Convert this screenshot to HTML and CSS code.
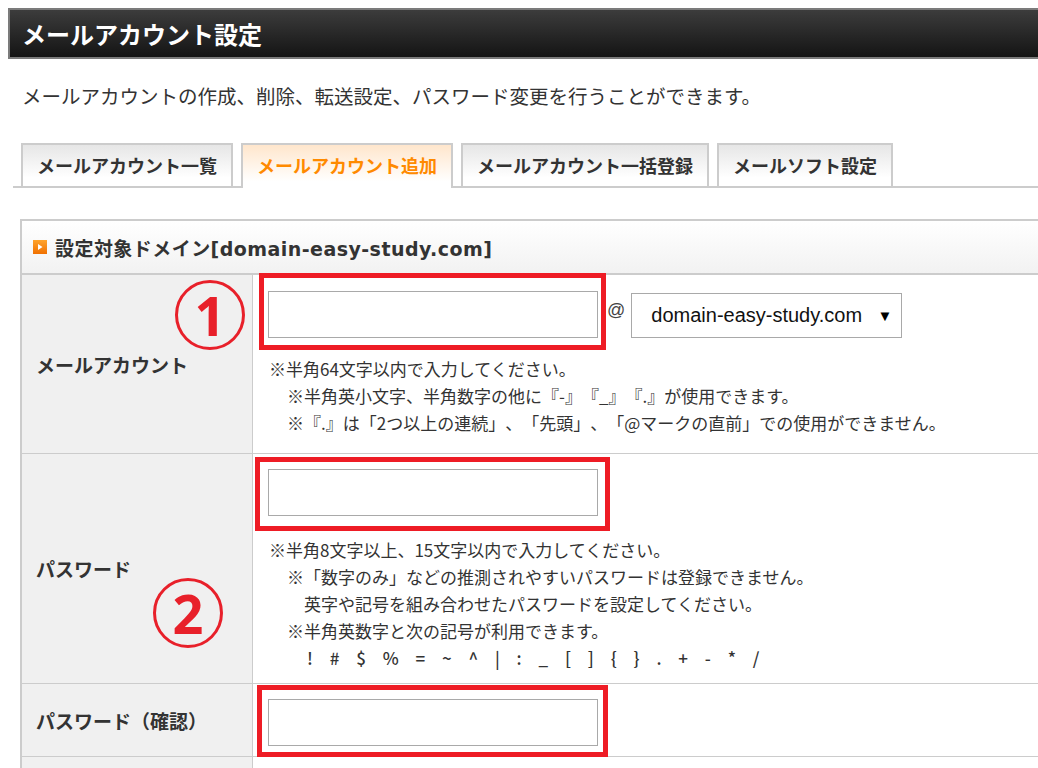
FILE: index.html
```html
<!DOCTYPE html>
<html lang="ja">
<head>
<meta charset="utf-8">
<title>メールアカウント設定</title>
<link rel="stylesheet" href="styles.css">
</head>
<body>
<div class="page">
  <h1 class="titlebar">メールアカウント設定</h1>
  <p class="desc">メールアカウントの作成、削除、転送設定、パスワード変更を行うことができます。</p>

  <ul class="tabs">
    <li class="tab">メールアカウント一覧</li>
    <li class="tab tab-active">メールアカウント追加</li>
    <li class="tab">メールアカウント一括登録</li>
    <li class="tab">メールソフト設定</li>
  </ul>

  <section class="panel">
    <div class="panel-head">
      <svg class="head-icon" width="14" height="14" viewBox="0 0 14 14">
        <defs>
          <linearGradient id="og" x1="0" y1="0" x2="0" y2="1">
            <stop offset="0" stop-color="#ffa42c"/>
            <stop offset="1" stop-color="#f07000"/>
          </linearGradient>
        </defs>
        <rect width="14" height="14" fill="url(#og)"/>
        <path d="M5 4 L9.5 7 L5 10 Z" fill="#fff"/>
      </svg>
      <span>設定対象ドメイン[domain-easy-study.com]</span>
    </div>

    <div class="row">
      <div class="label">
        メールアカウント
        <span class="mark mark-1">1</span>
      </div>
      <div class="cell">
        <div class="field-line">
          <div class="redbox redbox-1"><div class="input"></div></div>
          <span class="at">@</span>
          <div class="select"><span>domain-easy-study.com</span><span class="caret">▼</span></div>
        </div>
        <div class="notes notes-1">
          <p>※半角64文字以内で入力してください。</p>
          <p class="ind1">※半角英小文字、半角数字の他に『-』『_』『.』が使用できます。</p>
          <p class="ind1">※『.』は「2つ以上の連続」、「先頭」、「@マークの直前」での使用ができません。</p>
        </div>
      </div>
    </div>

    <div class="row">
      <div class="label">
        パスワード
        <span class="mark mark-2">2</span>
      </div>
      <div class="cell">
        <div class="redbox redbox-2"><div class="input"></div></div>
        <div class="notes notes-2">
          <p>※半角8文字以上、15文字以内で入力してください。</p>
          <p class="ind1">※「数字のみ」などの推測されやすいパスワードは登録できません。</p>
          <p class="ind2">英字や記号を組み合わせたパスワードを設定してください。</p>
          <p class="ind1">※半角英数字と次の記号が利用できます。</p>
          <p class="ind2 symbols">! # $ % = ~ ^ | : _ [ ] { } . + - * /</p>
        </div>
      </div>
    </div>

    <div class="row">
      <div class="label">パスワード（確認）</div>
      <div class="cell">
        <div class="redbox redbox-3"><div class="input"></div></div>
      </div>
    </div>

    <div class="row row-empty">
      <div class="label"></div>
      <div class="cell"></div>
    </div>
  </section>
</div>
</body>
</html>
```

FILE: styles.css
```css
html {
  overflow: hidden;
}
body {
  margin: 8px 0 0 8px;
  font-family: "Noto Sans CJK JP", "Noto Sans", sans-serif;
  color: #333;
  background: #fff;
  text-spacing-trim: space-all;
}
.page {
  width: auto;
}
.titlebar {
  margin: 0;
  height: 47px;
  line-height: 47px;
  padding-left: 12px;
  border: 2px solid #7b7b7b;
  border-right: none;
  background: linear-gradient(#3c3c3c, #141414);
  color: #fff;
  font-size: 24px;
  font-weight: 700;
}
.desc {
  margin: 25px 0 0 14px;
  font-size: 19.5px;
  line-height: 24px;
}
.tabs {
  list-style: none;
  margin: 35px 0 0 5px;
  padding: 0 0 0 8px;
  display: flex;
  gap: 8px;
  border-bottom: 2px solid #ccc;
}
.tab {
  height: 41px;
  line-height: 41px;
  padding: 0 14px;
  border: 2px solid #ccc;
  border-bottom: none;
  background: linear-gradient(#e6e6e6, #fff 80%);
  font-size: 18px;
  font-weight: 700;
  color: #333;
}
.tab-active {
  height: 43px;
  margin-bottom: -2px;
  background: linear-gradient(#ffe6cc, #fff 85%);
  color: #ff8a00;
}
.panel {
  margin: 31px 0 0 12px;
  border-left: 2px solid #ccc;
}
.panel-head {
  height: 52px;
  border-top: 2px solid #ccc;
  border-bottom: 2px solid #ccc;
  background: linear-gradient(#fff, #f2f2f2);
  display: flex;
  align-items: center;
  gap: 8px;
  padding-left: 11px;
  font-family: "DejaVu Sans", "Noto Sans CJK JP", sans-serif;
  font-size: 19px;
  font-weight: 700;
  letter-spacing: 0.45px;
  color: #333;
}
.head-icon {
  flex: none;
}
.row {
  display: grid;
  grid-template-columns: 231px 1fr;
  border-bottom: 1px solid #ccc;
}
.label {
  position: relative;
  background: #f0f0f0;
  border-right: 1px solid #ccc;
  display: flex;
  align-items: center;
  padding-left: 14px;
  font-size: 19px;
  font-weight: 700;
  color: #333;
}
.mark {
  position: absolute;
  width: 64px;
  height: 64px;
  border: 3px solid #e8202a;
  border-radius: 50%;
  color: #e8202a;
  font-family: "Noto Sans", sans-serif;
  font-size: 54px;
  font-weight: 700;
  line-height: 64px;
  text-align: center;
}
.mark-1 {
  left: 153px;
  top: 5px;
}
.mark-2 {
  left: 131px;
  top: 124px;
}
.cell {
  padding-left: 4px;
  min-width: 0;
}
.field-line {
  display: flex;
  align-items: flex-start;
}
.redbox {
  border: 5px solid #ee1c25;
  width: fit-content;
}
.input {
  width: 328px;
  height: 45px;
  border: 1px solid #a9a9a9;
  background: #fff;
}
.redbox-1 {
  margin: -2px 0 0 2px;
  padding: 13px 3px 7px 4px;
}
.redbox-2 {
  margin: 3px 0 0 -2px;
  padding: 7px 7px 10px 8px;
}
.redbox-3 {
  margin: 1px 0 -1px 0;
  padding: 9px 5px 6px 6px;
}
.at {
  margin: 25px 0 0 1px;
  font-family: "Liberation Sans", Arial, sans-serif;
  font-size: 18px;
  color: #444;
}
.select {
  margin: 18px 0 0 6px;
  width: 271px;
  height: 45px;
  box-sizing: border-box;
  border: 1px solid #a9a9a9;
  background: #fff;
  display: flex;
  align-items: center;
  justify-content: space-between;
  padding: 0 9px 0 19px;
  font-family: "Liberation Sans", Arial, sans-serif;
  font-size: 20px;
  color: #111;
}
.caret {
  font-size: 15px;
  color: #000;
}
.notes {
  margin-left: 12px;
  font-size: 17px;
  line-height: 27px;
  color: #333;
}
.notes p {
  margin: 0;
  white-space: nowrap;
}
.notes-1 {
  margin-top: 5px;
  padding-bottom: 17px;
}
.notes-2 {
  margin-top: 5px;
  padding-bottom: 12px;
}
.ind1 {
  padding-left: 18px;
}
.ind2 {
  padding-left: 35px;
}
.symbols {
  padding-left: 38px;
  font-weight: 500;
  word-spacing: 11px;
  letter-spacing: 1px;
}
.row-empty {
  height: 40px;
}
```
